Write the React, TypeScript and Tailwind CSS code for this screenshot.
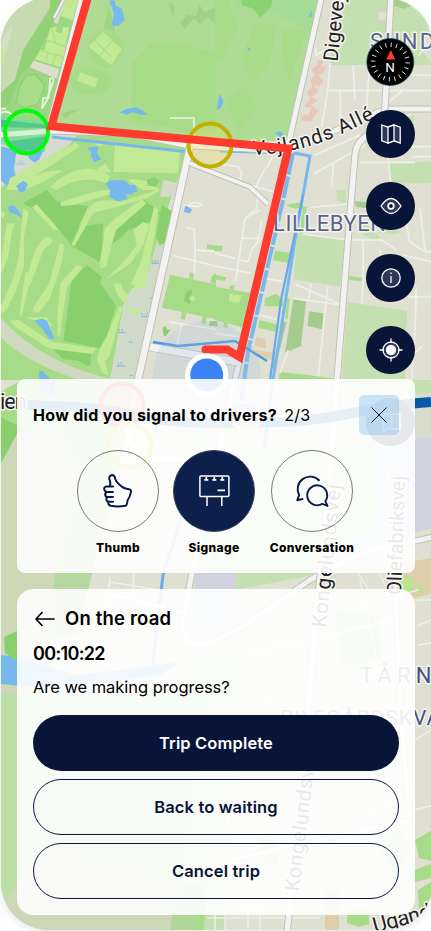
import React from "react";

const palette = {
  land: "#dfe0d2",
  park: "#afdc95",
  grass: "#a6dc87",
  wood: "#89d06d",
  fairway: "#c2e993",
  pale: "#c5e0b0",
  water: "#77b9ec",
  road: "#f2f2f1",
  edge: "#bdbeb4",
};

function Road({ d, w = 6 }: { d: string; w?: number }) {
  return (
    <g fill="none" strokeLinejoin="round">
      <path d={d} stroke={palette.edge} strokeWidth={w + 1.8} />
      <path d={d} stroke={palette.road} strokeWidth={w} />
    </g>
  );
}

function MapLabel({ x, y, size, angle = 0, length, color = "#1f2124", children }: {
  x: number; y: number; size: number; angle?: number; length: number; color?: string; children: string;
}) {
  return (
    <text
      transform={`translate(${x} ${y}) rotate(${angle})`}
      fontSize={size}
      fill={color}
      stroke="#f5f5ee"
      strokeWidth={3}
      strokeLinejoin="round"
      paintOrder="stroke"
      textLength={length}
      className="font-['Roboto',sans-serif]"
    >
      {children}
    </text>
  );
}

function CityMap() {
  const c = palette;
  return (
    <svg className="absolute inset-0" width="431" height="931" viewBox="0 0 431 931">
      <defs>
        <clipPath id="screen"><rect x="1" y="-2" width="432" height="932" rx="48" /></clipPath>
        <filter id="shade" x="-10%" y="-10%" width="120%" height="120%"><feGaussianBlur stdDeviation="5" /></filter>
        <path id="alle" d="M253 155Q292 154 333 138L380 116" />
      </defs>
      <rect x="1" y="1" width="432" height="932" rx="48" fill="#000" opacity=".09" filter="url(#shade)" />
      <g clipPath="url(#screen)">
        <rect width="431" height="931" fill={c.land} />

        {/* northern park */}
        <path d="M0 0H320L290 140L190 146L52 124L0 124Z" fill={c.park} />
        <g transform="scale(.33333)">
          <path d="M0 0H250L150 370H0Z" fill="#9dd683" />
          <path d="M0 0H150V20L70 150L45 240L0 290Z" fill="#c6dcb0" />
          <path d="M150 0H190L160 70L110 170L60 230L30 310L0 330V280L45 240L70 150L150 30Z" fill="#93d179" />
          <path d="M40 70L20 150L5 200L0 130Z" fill="#d3dfc3" />
          <path d="M0 145h12v40H0ZM195 0h45l-20 62l-38-14Z" fill={c.fairway} />
          <path d="M190 0h8L172 72L160 66Z" fill="#d8dcca" />
          <path d="M150 85L170 80L168 95L186 100L188 82H208L198 130H212L180 202L104 178L122 148L132 152Z" fill={c.fairway} />
          <path d="M134 118l64 22M122 152l66 18M156 88l12 40M145 156l-8 30M168 160l-12 36" stroke="#a8db82" strokeWidth="3" />
          <path d="M100 182L178 206L170 236L90 202Z" fill="#dcddcc" />
          <path d="M78 228L105 222L132 252L130 275L112 312L75 325L48 308L60 255Z" fill="#a8dc88" stroke="#8fcf76" strokeWidth="4" />
          <path d="M150 236q12-5 10 8l-20 58l-14 24l4-32h16Zm6 14l-14 44" fill="none" stroke="#e8f3df" strokeWidth="5" />
          <path d="M325 20L345 75L345 105L330 112L312 80Z" fill="#a1d487" />
          <path d="M328 2L343 0L348 18L366 26L374 60L356 77H334L342 42Z" fill={c.water} />
          <ellipse cx="318" cy="146" rx="54" ry="58" fill={c.grass} />
          <path d="M309 95L366 148L334 195L266 140Z" fill={c.fairway} />
          <path d="M282 118L333 170M337 122L300 166" stroke="#a4d77e" strokeWidth="3" />
          <ellipse cx="272" cy="244" rx="64" ry="40" fill={c.grass} />
          <path d="M240 217L294 236L285 262L230 242Z" fill={c.fairway} />
          <path d="M450 132H550L648 160V400L572 405L500 380L390 365L398 188Z" fill={c.grass} />
          <path d="M505 5l20 14-8 34ZM540 70l20-26 28 4 10-34 16 22 36-16V76L620 50l-18 26-20-20-28 30Z" fill="#a0d188" />
          <path d="M358 338L378 327L408 322L430 332L442 344H420L398 336L382 344Z" fill={c.water} />
          <path d="M185 340q30-5 55-15l-45 30Z" fill="#9cd07d" />
        </g>
        <g transform="translate(215 0)scale(.33333)">
          <path d="M60 0H315L292 100L200 50L130 20H60Z" fill="#a4dc95" />
          <path d="M78 0h95l-5 20-32 34-20-26-34-14Z" fill="#8ad372" />
          <path d="M120 70h65l-20 120-60 60-24-80ZM200 90h75l-50 150-20-40ZM0 0h40l30 80-50 100H0ZM30 300l60-40 40 60-60 80Z" fill={c.grass} opacity=".8" />
          <path d="M290 30v20h-10ZM97 140l10 8-6 6ZM14 282l12 20-8 22-14 6ZM180 398l16-4 12 12-8 14Z" fill={c.water} />
          <path d="M395 0H648V60L620 150L648 185V195H348V140Z" fill={c.pale} />
          <path d="M492 36h40v24h-40Z" fill={c.land} />
          <path d="M534 0h30l25 18-20 8-35-8Z" fill="#a9cd91" />
          <path d="M570 345h28v20h-28ZM520 485H648V550H528Z" fill={c.pale} />
          <path d="M305 180l20 4-5 18 16-3-10 20-18 5 18 18-12 16-18-2 14 18-20 16 18 12-20 12 22 16-8 14-12 20-32-2 8-20 14 4 8-22-20-4 18-26-12-14 18-22-8-18 16-12-10-20 20-16Z" fill="#e9c8bb" />
          <path d="M303 142v24l30-18M335 272H648M376 272v100M464 195L455 315M414 195L420 300M345 190L338 272L320 380M560 225H648M648 130L610 165M560 275L515 310M590 345L410 370M435 405L300 465M450 435L295 522M355 490L350 560M436 487H600M515 440L530 570M570 440H648M590 470H648M0 490L70 500L80 520L75 545M70 545L190 580M155 505l30-60M150 505l-30 60" fill="none" stroke="#efefea" strokeWidth="5" />
        </g>

        {/* golf course and lakes */}
        <path d="M0 126L60 128L140 138L190 145L160 230L140 320L112 380H0Z" fill={c.grass} />
        <path d="M0 126L78 134L68 146L20 173L0 188Z" fill="#d5dccf" />
        <path d="M0 392L40 370L110 380L140 380L110 500L90 573H0Z" fill={c.grass} />
        <g transform="scale(.33333)">
          <path d="M0 345L140 368L135 455L75 460L0 430Z" fill="#83d8a4" />
          <path d="M0 358L145 375L142 384L0 382ZM20 425L142 408L118 450L100 470L60 458Z" fill="#4fb99a" />
          <path d="M0 438L50 450L42 505L48 535L20 556L0 540Z" fill={c.water} />
          <path d="M80 450L130 452L118 478L104 488L88 476Z" fill={c.water} />
          <path d="M50 492h26M56 488l6-8M63 490l8-8" stroke="#9cc4de" strokeWidth="3" />
          <path d="M0 340q20-12 36 4M0 326h18" fill="none" stroke="#eff3ea" strokeWidth="5" />
          <path d="M345 430L540 450L535 520L340 516Z" fill={c.fairway} />
          <path d="M30 535Q110 490 225 428L240 438Q150 500 100 530Q150 505 190 512L120 550L70 570H20ZM150 560Q250 470 330 528L320 550Q250 520 170 570ZM315 490l18 26-60 4ZM384 540Q440 530 480 570H430ZM275 425l40 5-15 12Z" fill={c.fairway} />
          <path d="M260 444L296 438L290 458L304 478L282 486L272 466L274 456Z" fill={c.water} />
          <path d="M48 558L70 542L84 552L76 572H58ZM316 552L330 541H372L390 555H406L414 575H334Z" fill={c.water} />
          <path d="M442 540l20-8 18 10-14 18-24-4Z" fill={c.wood} />
          <path d="M490 540L540 550L530 590H480Z" fill="#d7dacb" />
        </g>
        <g transform="translate(0 190)scale(.33333)">
          <path d="M68 40L140 0L170 35L265 48L235 110L310 100L305 150L430 28L485 70L450 95L385 120L362 145L310 180L298 215L215 168L150 85Z" fill={c.wood} />
          <path d="M262 226L306 262L300 280L348 345L320 440L300 475L190 452L216 262ZM160 478L275 490L270 530L235 512L190 508Z" fill={c.wood} />
          <g fill={c.fairway}>
            <path d="M180 38Q250 12 310 0H370L290 25L220 45L185 48ZM214 166L262 58Q285 20 360 35L425 15L470 0H480L440 25L350 50L280 68L224 168Z" />
            <path d="M425 28L440 40L348 120L318 228Q305 240 298 228L315 115L350 82ZM318 268Q375 215 410 165L400 120L430 96L448 105L430 165L390 222ZM462 50L476 60L438 285L420 292L392 282L425 210Z" />
            <path d="M96 52L110 42L176 120L160 118ZM20 100h24l-8 25-12 80L5 250L0 240ZM70 55L86 65L72 140V230L45 310L18 362L0 372V355L40 265L55 205ZM134 142L154 142L156 158L130 180L90 288L78 286L92 220L110 170Z" />
            <path d="M180 160L194 166L182 230L148 330L116 368L98 362L104 345L148 280ZM230 225L250 230L202 290L190 360L180 440L172 435V370L182 278ZM76 245L94 250L66 378L58 376Z" />
            <path d="M340 282L362 280L370 300L400 330L435 345L430 370L395 360L355 320ZM30 392L55 390L155 455L290 475L275 492L145 475L42 408ZM75 382H140L158 410L142 405ZM356 350L368 352L330 495L315 515L325 555L308 550L292 510L300 475L320 440ZM0 60L18 72L8 85L0 78Z" />
          </g>
          <path d="M330 0H408L396 14L378 12L382 28L352 34L328 20ZM24 50L38 45L54 58L68 84L50 74L28 66ZM102 392L126 386L142 392L148 412L164 446L150 448L122 410ZM50 0H76L66 8Z" fill={c.water} />
          <path d="M370 345L395 295L430 292L470 160L505 60L520 60L410 570H330Z" fill="#cfdac8" />
          <path d="M395 300l40-10 8-30-35 20ZM370 345l60 20-30 10Z" fill={c.fairway} />
          <path d="M485 45L520 65L500 160L478 165L468 140Z" fill={c.wood} />
          <path d="M454 220h24M460 218l-4-7M466 218v-9M472 218l4-7M355 428h22M360 424l-3-7M367 424v-8M350 528h25M357 524l-3-7M364 524v-8M424 380h20M429 376l-6-8M436 376l8-9M386 456h12M388 556h12M450 325h9" stroke="#84b9dc" strokeWidth="3" />
          <path d="M0 380Q120 520 345 570H240Q80 520 0 440Z" fill="#d0d9bf" />
          <path d="M118 542L128 544L158 575H118Z" fill={c.water} />
        </g>
        <path d="M0 417L17 425L30 430L0 465Z" fill={c.wood} />
        <path d="M0 465L18 432L60 430L80 470L55 573L50 690L20 730H0Z" fill="#ccd8b8" />
        <path d="M40 380H55L55 398L40 391Z" fill={c.water} />

        {/* residential blocks */}
        <g transform="translate(0 190)scale(.33333)">
          <path d="M510 254L648 283V388L486 353Z" fill={c.grass} />
          <path d="M570 246l12 5-5 25-12-3ZM635 258l13-8v32l-16-4ZM546 365l14 3-6 22-12-4ZM606 378l14 3-3 22-12-2ZM622 163l26 4v14l-28-4Z" fill={c.grass} />
          <path d="M558 306l16-8 4 24-10 20-16-10ZM488 414l8-6 6 12 10-2-16 22-5-4ZM630 394h22v14h-25Z" fill="#8fca79" />
          <path d="M576 315l12 12-10 10-12-12Z" fill={c.fairway} />
          <path d="M556 45L578 60L568 70L552 66Z" fill={c.water} />
          <path d="M550 45l35 5 20-6-5-4-22-2-10 6 28 8M556 112l26 5 4 60-4 70M586 180l70 6M520 197l130 32M508 396l140 22M545 404l-15 66" fill="none" stroke="#f2f2ed" strokeWidth="4" />
        </g>
        <g transform="translate(215 190)scale(.33333)">
          <path d="M0 290L105 308L82 412L0 390ZM0 165l24 4-4 14-20 2ZM0 254l35 8-4 10-31-3ZM28 385h10v28H25ZM45 288l14-4-4 16-12-4ZM180 182l50 7-8 30-48-8ZM150 325l34-14 20 18v20h-56ZM133 390l60 15-5 22-58-14ZM400 258l42 5v10l-42-3ZM212 45l45-8 15 20-40-3ZM216 325l8 0-6 62h-6ZM195 545L400 570H190ZM265 50l10 0-6 60-22 130-8-2 15-110Z" fill={c.grass} />
          <path d="M245 128L390 152L375 290L238 268ZM398 336L577 362L570 570H380ZM365 0h28v38l-28-6ZM430 95l30 10 35 40-20 6-35-20ZM490 118h50l20 8-20 6-50-2Z" fill={c.pale} />
          <path d="M235 328L273 334L258 468L210 488ZM282 364L325 370L322 418L278 408ZM205 395l10 2-35 140-10-4ZM418 33l35 4v18l-30-5ZM0 394l8 4v12H0Z" fill="#a5cb8e" />
          <path d="M43 310l37 6-8 24-30-6Z" fill={c.fairway} />
          <path d="M124 442l28 6v26l-34-6ZM118 478l60 12-4 20-60-14Z" fill="#dfcfaf" />
          <path d="M285 52L400 42M262 132L400 150H500L545 180M240 282L380 345M288 280L280 335M338 290L310 560M235 325L380 345M445 150V250L440 340M496 180V330M604 290L600 430L590 570M565 195L648 215M580 320H648M565 58L585 155L630 185H648M615 55L630 180M220 480L195 550M90 85L135 60M130 0L125 55L90 85L80 150L62 275M80 145H140M100 215L75 210M100 215L112 175L130 155L140 90M0 228L110 250M0 190L60 205M150 265L205 275M130 375L188 388M600 490L620 470M0 430L70 440" fill="none" stroke="#efefea" strokeWidth="5" />
        </g>
        <path d="M415 390H431V440H415Z" fill="#d9dccb" />
        <path d="M400 380H431L431 392L345 402L345 380H360L400 388Z" fill={c.pale} />
        <path d="M415 440L431 437V528L415 533L260 573L236 573L232 627L200 640L192 610L205 480Q320 455 395 445Z" fill="#d0d2e0" />
        <path d="M90 500L112 500L92 573L78 635L48 640L55 573Z" fill="#b4d89f" />
        <path d="M215 450L375 440L380 520L312 575L236 590L205 590Z" fill={c.pale} />
        <path d="M185 430L245 440L225 573L212 620L205 590Z" fill="#c8dec0" />
        <path d="M200 573H236L232 627L212 640L197 630Z" fill="#d0d2e0" />
        <path d="M431 558L390 565L405 600L431 594Z" fill="#dfceac" />
        <path d="M399 577h14v16l-8 4ZM417 585h6v8h-6Z" fill="#b8e58e" />

        {/* southern shore */}
        <path d="M0 655L18 657L75 675L120 670L180 662L160 675L60 690L0 684Z" fill={c.water} />
        <path d="M4 637l13-6v30l-12-8Z" fill={c.wood} />
        <path d="M190 662L245 640L225 931H170Z" fill="#c3dfb3" />
        <path d="M0 694H205L175 931H0Z" fill="#bddea7" />
        <path d="M0 906L50 850L180 880L172 931H0Z" fill="#ccd8b8" />
        <path d="M175 890L206 880L203 931H170Z" fill="#b0d797" />
        <path d="M198 906L207 902L203 931H192Z" fill={c.grass} />
        <path d="M347 910h22v14l-10 3-12-4ZM415 840l16-9v30l-12-3ZM415 870l16-6v14l-20 5ZM418 890l13-8v26h-12ZM258 835l15 5 6 26-15-4Z" fill={c.grass} />
        <path d="M325 890h14v41h-14Z" fill="#dfceac" />
        <path d="M335 610L380 615L382 660L342 665ZM380 850l20-20 12 20-16 25Z" fill="#bbdfa8" />
        <path d="M110 576L103 660M134 572L128 660M110 582L165 591M215 930V830M248 930V810M230 700L225 930M110 606L260 650L400 620M225 660L390 620M228 710L415 670M217 860L405 800M417 600H431M417 626L431 620M418 645L431 643M415 740L431 730M414 810L431 806M360 580L385 700M365 605L418 590M255 590L270 700M235 725L398 705M205 910H300M207 918H320M260 900V931M336 460L415 440M345 470L405 530M360 550L390 560M370 555L385 585M350 560L370 592" fill="none" stroke="#f0f0eb" strokeWidth="1.4" />

        {/* waterways */}
        <path d="M52 137L190 152M220 151L294 153L310 156L295 240L273 380L264 450" fill="none" stroke={c.water} strokeWidth="3" />
        <path d="M293 153L284 196L248 352L240 410" fill="none" stroke={c.water} strokeWidth="4" strokeDasharray="22 2" />
        <path d="M303 195L281 300L270 380" fill="none" stroke="#6ba7ea" strokeWidth="2.2" />
        <path d="M183 513L163 575L152 670" fill="none" stroke="#65aceb" strokeWidth="3" />

        {/* roads */}
        <Road d="M82 -3L49 126" w={4.5} />
        <Road d="M65 -3L54 18" w={2} />
        <Road d="M-3 135L52 131L130 134L190 146L290 151L320 137L385 109H435" w={5} />
        <Road d="M322 -5L290 137L288 150L235 380L192 573L182 626Q184 649 206 643Q232 635 252 620L310 580Q350 557 370 551L433 537" w={5} />
        <Road d="M190 147L138 380L128 430Q129 452 150 459L217 459" w={6.5} />
        <Road d="M189 163L250 187L268 204" w={4} />
        <Road d="M391 -4L385 107Q382 130 368 135Q356 142 355 155L352 190L337 380L328 497L315 627L308 713L287 934" w={5.5} />
        <Road d="M150 347L190 354L238 362" w={7} />
        <Road d="M395 580L401 720L410 820L230 860" w={4} />
        <Road d="M110 594L182 612" w={4} />
        <path d="M170 118h24v28" fill="none" stroke="#eff4ea" strokeWidth="1.5" />
        <path d="M153 342L178 346L235 341L267 361" fill="none" stroke="#4c96e4" strokeWidth="2.5" />
        <path d="M-3 403C40 407 90 405 130 414C190 427 230 422 282 422C340 420 360 407 431 402" fill="none" stroke="#0a59a9" strokeWidth="10" />

        <MapLabel x={337.5} y={62} size={20.5} angle={-84} length={66}>Digevej</MapLabel>
        <text fontSize="20" fill="#1f2124" stroke="#f5f5ee" strokeWidth="3" strokeLinejoin="round" paintOrder="stroke" textLength="128" className="font-['Roboto',sans-serif]">
          <textPath href="#alle" textLength="128">Vejlands Allé</textPath>
        </text>
        <MapLabel x={370} y={49} size={22} length={95} color="#5a6390">SUNDBY</MapLabel>
        <MapLabel x={273} y={231} size={22} length={113} color="#5a6390">LILLEBYEN</MapLabel>
        <MapLabel x={0} y={409} size={22} length={27}>ien</MapLabel>
        <MapLabel x={326} y={628} size={20.5} angle={-84} length={144}>Kongelundsvej</MapLabel>
        <MapLabel x={401} y={595} size={20} angle={-88} length={119}>Oliefabriksvej</MapLabel>
        <MapLabel x={299} y={892} size={20.5} angle={-83} length={141}>Kongelundsvej</MapLabel>
        <MapLabel x={360} y={683} size={22} length={108} color="#46518a">TÅRNBY</MapLabel>
        <MapLabel x={280} y={725} size={21} length={214} color="#46518a">PILEGÅRDSKVARTER</MapLabel>
        <MapLabel x={375} y={933} size={21.5} angle={-15} length={96}>Ugandavej</MapLabel>

        {/* hitchhiking spots */}
        <circle cx="26.5" cy="132" r="21.5" fill="#61ff60" fillOpacity=".22" stroke="#00fa0a" strokeWidth="4" />
        <circle cx="210" cy="145" r="21.5" fill="#f0df65" fillOpacity=".3" stroke="#c0b000" strokeWidth="4" />
        <circle cx="122" cy="405" r="21.5" fill="#ff5959" fillOpacity=".4" stroke="#f02935" strokeWidth="4" />
        <circle cx="130" cy="446" r="21.5" fill="#fbf4a5" fillOpacity=".3" stroke="#d6c51e" strokeWidth="4" />
        <rect x="233" y="403" width="26" height="25" rx="6" fill="#b9bbd9" stroke="#e5e5f7" strokeWidth="2" />

        {/* travelled route and current position */}
        <circle cx="206.7" cy="375" r="54" fill="#a9bfe6" fillOpacity=".23" />
        <path d="M88 -3L51.3 126.3L288.3 148.5L239.5 357L227 349.4H205" fill="none" stroke="#ff3b30" strokeWidth="8" />
        <circle cx="205.5" cy="349.4" r="4" fill="#ff3b30" />
        <circle cx="206.7" cy="375" r="21.7" fill="#fff" />
        <circle cx="206.7" cy="375" r="16.5" fill="#3b82f6" />
      </g>
    </svg>
  );
}

function Compass() {
  return (
    <svg width="49" height="48" viewBox="0 0 49 48">
      <circle cx="24.3" cy="24" r="23.5" fill="#000" stroke="#154d70" strokeWidth=".7" />
      {Array.from({ length: 20 }, (_, i) => (
        <path key={i} d="M24.3 4.5V9" transform={`rotate(${i * 18 + 3} 24.3 24)`} stroke="#e6e6e6" strokeWidth=".9" />
      ))}
      <path d="M24.8 12L29.3 21.5H20.3Z" fill="#ff3b30" />
      <text x="24" y="34" textAnchor="middle" fontSize="13.5" fontWeight="400" fill="#fff" className="font-['Roboto',sans-serif]">N</text>
    </svg>
  );
}

function RoundButton({ label, children }: { label: string; children: React.ReactNode }) {
  return (
    <button aria-label={label} className="flex h-12 w-[49px] items-center justify-center rounded-full bg-[#081538]">
      <svg width="24" height="24" viewBox="0 0 24 24" fill="none" stroke="#fff" strokeWidth="1.3">{children}</svg>
    </button>
  );
}

function MapControls() {
  return (
    <div className="absolute top-[38px] left-[366px] flex flex-col gap-6">
      <Compass />
      <RoundButton label="Map layers">
        <path d="M2.8 3L9 5.2L15 3L21.2 5.2V21L15 18.8L9 21L2.8 18.8Z" fill="#2d3958" />
        <path d="M9 5.2L15 3V18.8L9 21Z" fill="#081538" />
      </RoundButton>
      <RoundButton label="Visibility">
        <path d="M2 12Q12-3 22 12Q12 27 2 12Z" fill="#2d3958" />
        <circle cx="12" cy="12" r="2.8" fill="#081538" strokeWidth="1.8" />
      </RoundButton>
      <RoundButton label="Information">
        <circle cx="12" cy="12" r="9.2" fill="#2d3958" />
        <path d="M12 10V17M12 6.5V8" />
      </RoundButton>
      <RoundButton label="Locate me">
        <circle cx="12" cy="12" r="8" fill="#2d3958" />
        <circle cx="12" cy="12" r="4.5" fill="#fff" />
        <path d="M12 .5V5M12 19V23.5M.5 12H5M19 12H23.5" />
      </RoundButton>
      <RoundButton label="Report">
        <path d="M4 4H21V19H8L4 22ZM12.5 7V13M12.5 15V17" fill="#2d3958" />
      </RoundButton>
    </div>
  );
}

function ThumbIcon() {
  return (
    <svg width="30" height="34" viewBox="0 0 30 34" fill="#fff" stroke="#0a1a44" strokeWidth="2" strokeLinejoin="round" strokeLinecap="round">
      <path d="M10 12.5H4Q1 12.5 1.2 15Q1.5 17.5 4 18Q1.8 19 2.2 21Q2.5 22.7 4.5 23Q3 24.3 3.5 26Q3.8 27.5 5.5 27.8Q4.5 31 8 31.8Q15 33.2 22.5 31.8Q24 31.5 24.5 26.5Q27.5 22 28 17.5Q28 15.3 26 15.2Q20.5 14.8 17.5 11.5Q12 7 11.8 3Q10.5 .5 8.2 1.3Q5.8 2 6.3 5Q8 8.5 6.8 12.2" />
      <path d="M4 18H10M4.5 23H10M5.5 27.8H10" fill="none" />
    </svg>
  );
}

function SignIcon() {
  return (
    <svg width="31" height="32" viewBox="0 0 31 32" fill="none" stroke="#fff" strokeWidth="1.5">
      <rect x=".9" y="1" width="29" height="20.5" rx="1" />
      <path d="M8 21.5V31M22.8 21.5V31" />
      <path d="M5.3 4.8H9.3M13.3 4.8H17.3M21.3 4.8H25.3M7.3 2V5M15.3 2V5M23.3 2V5M18.5 15.3H26" strokeWidth="1.7" />
    </svg>
  );
}

function ChatIcon() {
  return (
    <svg className="overflow-visible" width="33" height="34" viewBox="0 0 33 34" fill="none" stroke="#0a1a44" strokeWidth="1.9" strokeLinejoin="round" strokeLinecap="round">
      <path d="M23 6.2A12.55 12.55 0 0 0 3.2 21.2L1.2 26.2L6.5 25" />
      <path d="M29.3 27.2A10 10 0 1 0 26.5 29.8L31.5 32Z" />
    </svg>
  );
}

function Choice({ label, active = false, children }: { label: string; active?: boolean; children: React.ReactNode }) {
  return (
    <div className="flex w-[82px] flex-col items-center">
      <button aria-label={label} className={active
        ? "flex size-[82px] items-center justify-center rounded-full border border-[#3b4057] bg-[#0c204b] pb-px"
        : "flex size-[82px] items-center justify-center rounded-full border border-[#777]"}>
        {children}
      </button>
      <span className="mt-2 text-xs leading-4 font-extrabold tracking-[0.03em] whitespace-nowrap">{label}</span>
    </div>
  );
}

export default function App() {
  return (
    <div className="relative h-[931px] w-[431px] overflow-hidden bg-white font-['Inter',sans-serif] text-black">
      <CityMap />
      <MapControls />
      <main className="relative flex flex-col gap-4 pt-[379px] pr-4 pl-[17px]">
        <section className="h-[194px] rounded-lg bg-white/90 px-4 pt-4">
          <header className="flex h-10 items-center">
            <h1 className="text-base font-bold tracking-[0.02em] whitespace-nowrap">How did you signal to drivers?</h1>
            <span className="ml-[7px] text-base tracking-[0.02em]">2/3</span>
            <button aria-label="Close" className="ml-auto flex size-10 items-center justify-center rounded-[5px] bg-[#82bff0]/40">
              <svg width="16" height="16" viewBox="0 0 16 16" stroke="#0a1a44" strokeWidth="1"><path d="M.5 .5L15.5 15.5M15.5 .5L.5 15.5" /></svg>
            </button>
          </header>
          <div className="mt-[15px] ml-11 grid grid-cols-[96px_98px_82px]">
            <Choice label="Thumb"><ThumbIcon /></Choice>
            <Choice label="Signage" active><SignIcon /></Choice>
            <Choice label="Conversation"><ChatIcon /></Choice>
          </div>
        </section>

        <section className="h-[326px] rounded-2xl bg-white/90 px-4 pt-4">
          <div className="flex h-[27px] items-center gap-[10px]">
            <svg className="ml-0.5" width="20" height="16" viewBox="0 0 20 16" fill="none" stroke="#000" strokeWidth="1.7" strokeLinecap="round" strokeLinejoin="round"><path d="M7 1.5L1 8L7 14.5M1 8H19" /></svg>
            <h2 className="text-[18.5px] font-semibold tracking-[0.01em] whitespace-nowrap">On the road</h2>
          </div>
          <p className="mt-2 text-lg leading-[27px] font-semibold tracking-[-0.037em]">00:10:22</p>
          <p className="mt-2 text-[16.5px] leading-6 tracking-[-0.003em] whitespace-nowrap">Are we making progress?</p>
          <div className="mt-4 flex flex-col gap-2 text-[16.5px] font-semibold tracking-[0.008em] text-[#081538]">
            <button className="h-14 rounded-full bg-[#081538] text-white">Trip Complete</button>
            <button className="h-14 rounded-full border border-[#081538]">Back to waiting</button>
            <button className="h-14 rounded-full border border-[#081538]">Cancel trip</button>
          </div>
        </section>
      </main>
    </div>
  );
}
